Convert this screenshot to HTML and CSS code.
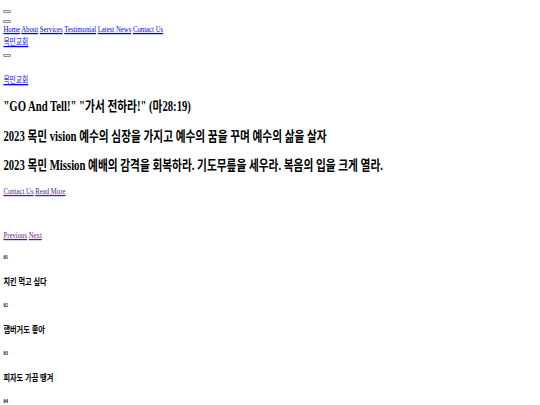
FILE: index.html
```html
<!DOCTYPE html>
<html lang="ko">
<head>
<meta charset="utf-8">
<title>목민교회</title>
<link rel="stylesheet" href="styles.css">
</head>
<body class="page">
<header class="site-header">
  <button class="menu-btn menu-btn--open" type="button"></button>
  <nav class="main-nav">
    <button class="menu-btn menu-btn--close" type="button"></button>
    <div class="nav-links text-tall"><a href="#home">Home</a> <a href="#about">About</a> <a href="#services">Services</a> <a href="#testimonial">Testimonial</a> <a href="#news">Latest News</a> <a href="#contact">Contact Us</a></div>
  </nav>
  <a class="logo text-tall" href="#home">목민교회</a>
</header>
<main class="content">
  <button class="menu-btn menu-btn--toggle" type="button"></button>
  <div class="brand text-tall"><a href="#home">목민교회</a></div>
  <h2 class="hero-title text-tall">"GO And Tell!" "가서 전하라!" (마28:19)</h2>
  <h2 class="hero-title text-tall">2023 목민 vision 예수의 심장을 가지고 예수의 꿈을 꾸며 예수의 삶을 살자</h2>
  <h2 class="hero-title text-tall">2023 목민 Mission 예배의 감격을 회복하라. 기도무릎을 세우라. 복음의 입을 크게 열라.</h2>
  <div class="cta text-tall"><a class="link-visited" href="#contact">Contact Us</a> <a class="link-visited" href="#about">Read More</a></div>
  <div class="slider-nav text-tall"><a class="link-visited" href="#prev">Previous</a> <a class="link-visited" href="#next">Next</a></div>
  <section class="features">
    <h6 class="feature-num text-tall">01</h6>
    <h4 class="feature-title text-tall">치킨 먹고 싶다</h4>
    <h6 class="feature-num text-tall">02</h6>
    <h4 class="feature-title text-tall">햄버거도 좋아</h4>
    <h6 class="feature-num text-tall">03</h6>
    <h4 class="feature-title text-tall">피자도 가끔 땡겨</h4>
    <h6 class="feature-num text-tall">04</h6>
  </section>
</main>
</body>
</html>
```
FILE: styles.css
```css
html {
  background: #ffffff;
}

.page {
  margin: 0;
  padding: 10px 3.4px 0;
  font-family: "Liberation Serif", "Noto Sans CJK KR", serif;
  font-size: 6.75px;
  line-height: 10px;
  color: #000000;
}

.page a {
  color: #0000ee;
  text-decoration: underline;
}

.page a.link-visited {
  color: #551a8b;
}

/* the reference type is drawn narrower than it is tall */
.text-tall {
  transform: scaleY(1.3);
}

.menu-btn {
  display: block;
  box-sizing: border-box;
  width: 8px;
  height: 3px;
  padding: 0;
  margin: 0;
  border: 1px solid #8d8d8d;
  border-radius: 1px;
  background: #efefef;
}

.menu-btn--close {
  margin-top: 6.7px;
}

.nav-links {
  margin-top: 2.8px;
  line-height: 8px;
  white-space: nowrap;
}

.logo {
  display: block;
  width: max-content;
  margin-top: 3.2px;
  line-height: 10px;
}

.menu-btn--toggle {
  margin-top: 7px;
}

.brand {
  margin-top: 16.3px;
  line-height: 13px;
}

.hero-title {
  margin: 11.5px 0;
  font-size: 10.7px;
  line-height: 18px;
  font-weight: bold;
}

.cta {
  line-height: 10px;
}

.slider-nav {
  margin-top: 34px;
  line-height: 10px;
}

.feature-num {
  margin: 14px 0 15px;
  font-size: 4.5px;
  line-height: 7px;
  font-weight: bold;
}

.feature-title {
  margin: 0;
  font-size: 7.2px;
  line-height: 12px;
  font-weight: bold;
}
```
